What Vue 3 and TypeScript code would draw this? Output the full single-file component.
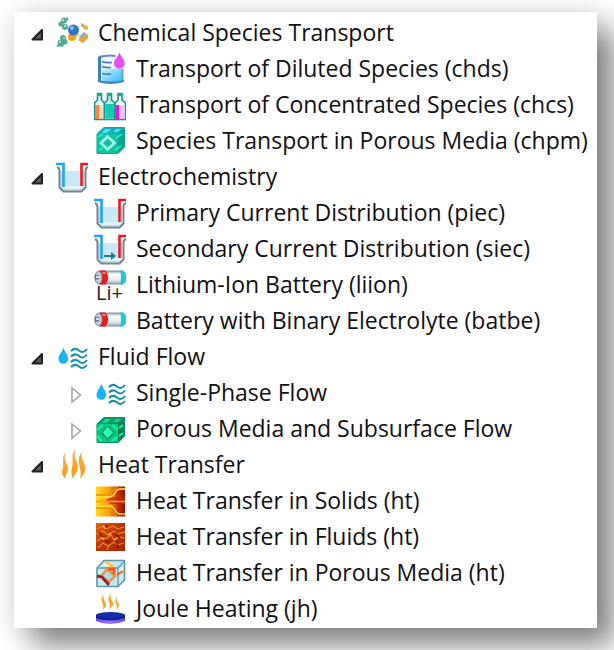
<script setup lang="ts">
import { reactive } from 'vue'

interface TreeItem {
  label: string
  icon: string
  branch?: boolean
}

interface TreeGroup extends TreeItem {
  open: boolean
  children: TreeItem[]
}

const groups = reactive<TreeGroup[]>([
  {
    label: 'Chemical Species Transport',
    icon: 'molecules',
    open: true,
    children: [
      { label: 'Transport of Diluted Species (chds)', icon: 'diluted' },
      { label: 'Transport of Concentrated Species (chcs)', icon: 'bottles' },
      { label: 'Species Transport in Porous Media (chpm)', icon: 'porous-species' },
    ],
  },
  {
    label: 'Electrochemistry',
    icon: 'cell',
    open: true,
    children: [
      { label: 'Primary Current Distribution (piec)', icon: 'cell' },
      { label: 'Secondary Current Distribution (siec)', icon: 'cell-arrow' },
      { label: 'Lithium-Ion Battery (liion)', icon: 'lithium' },
      { label: 'Battery with Binary Electrolyte (batbe)', icon: 'battery' },
    ],
  },
  {
    label: 'Fluid Flow',
    icon: 'flow',
    open: true,
    children: [
      { label: 'Single-Phase Flow', icon: 'flow', branch: true },
      { label: 'Porous Media and Subsurface Flow', icon: 'porous-flow', branch: true },
    ],
  },
  {
    label: 'Heat Transfer',
    icon: 'heat',
    open: true,
    children: [
      { label: 'Heat Transfer in Solids (ht)', icon: 'heat-solid' },
      { label: 'Heat Transfer in Fluids (ht)', icon: 'heat-fluid' },
      { label: 'Heat Transfer in Porous Media (ht)', icon: 'heat-porous' },
      { label: 'Joule Heating (jh)', icon: 'joule' },
    ],
  },
])
</script>

<template>
  <svg class="sprite" aria-hidden="true">
    <defs>
      <linearGradient id="g-liquid" x1="0" y1="0" x2="1" y2="1">
        <stop offset="0" stop-color="#c4f3ff" />
        <stop offset="1" stop-color="#35b6f4" />
      </linearGradient>
      <linearGradient id="g-cube" x1="0" y1="0" x2="1" y2="1">
        <stop offset="0" stop-color="#12c9b6" />
        <stop offset="1" stop-color="#08c48c" />
      </linearGradient>
      <linearGradient id="g-flame" x1="0" y1="0" x2="0" y2="1">
        <stop offset="0" stop-color="#f7b04a" />
        <stop offset="1" stop-color="#ff9c08" />
      </linearGradient>
      <linearGradient id="g-solid" x1="0" y1="0" x2="1" y2="0">
        <stop offset="0" stop-color="#ffd91c" />
        <stop offset="0.45" stop-color="#f8a30c" />
        <stop offset="0.75" stop-color="#c83208" />
        <stop offset="1" stop-color="#8e0f05" />
      </linearGradient>
      <linearGradient id="g-fluid" x1="0" y1="0" x2="1" y2="1">
        <stop offset="0" stop-color="#e0620c" />
        <stop offset="0.5" stop-color="#b93206" />
        <stop offset="1" stop-color="#a82605" />
      </linearGradient>
      <linearGradient id="g-metal" x1="0" y1="0" x2="0" y2="1">
        <stop offset="0" stop-color="#8fa5b3" />
        <stop offset="0.25" stop-color="#ffffff" />
        <stop offset="0.7" stop-color="#e5e9ee" />
        <stop offset="1" stop-color="#9aabb7" />
      </linearGradient>
      <linearGradient id="g-disc" x1="0" y1="0" x2="1" y2="0">
        <stop offset="0" stop-color="#6a48e8" />
        <stop offset="0.5" stop-color="#a070f4" />
        <stop offset="1" stop-color="#6a48e8" />
      </linearGradient>
    </defs>

    <symbol id="molecules" viewBox="0 0 32 32">
      <g fill="#55aa8b">
        <circle cx="8" cy="3.500" r="3" />
        <circle cx="5" cy="7" r="2.600" />
        <circle cx="9" cy="10" r="3" />
        <circle cx="7" cy="21" r="3" />
        <circle cx="9" cy="25" r="2.600" />
        <circle cx="5" cy="26" r="3.400" />
        <path d="M9 2l3-2v4zM0 29.500l4-5 3 5z" />
      </g>
      <g fill="#b8dccd">
        <circle cx="7" cy="3" r="1.200" />
        <circle cx="9" cy="9" r="1.200" />
        <circle cx="4" cy="25" r="1.200" />
        <circle cx="8" cy="21" r="1" />
      </g>
      <circle cx="16" cy="20" r="4" fill="#f5a312" />
      <path d="M19 16l5 1-4 4z" fill="#f3c66d" />
      <circle cx="17.500" cy="13" r="5.500" fill="#2f74c8" />
      <circle cx="16" cy="11" r="2" fill="#8bbcef" />
      <path d="M25 6l7 3.500v3L29 13l-4-4z" fill="#eeb248" />
      <path d="M23 21l6-5 3 2v3l-5 5-4-2z" fill="#eda32e" />
      <path d="M23 20l5-5 2 2-4 4zM25 6l3 2-1 2z" fill="#8aa9c9" />
    </symbol>

    <symbol id="diluted" viewBox="0 0 32 32">
      <path d="M5 4q11-2 24 0v24q-12 4-24 0z" fill="#eef7fe" />
      <path d="M8 17q11-2 20-1v12q-10 3-20 1z" fill="url(#g-liquid)" />
      <path d="M4.500 4q10-2.500 17-1" fill="none" stroke="#5c8cc4" stroke-width="2" />
      <path d="M5.500 4v24" fill="none" stroke="#3a7cbc" stroke-width="3" />
      <path d="M28.500 16v12" fill="none" stroke="#5fa5da" stroke-width="2" />
      <path d="M8 8.500q4 1.500 10 1M8 13.500q4 1.500 9 1M8 20.500q4 1 9 0.500" fill="none" stroke="#4f7ab4" stroke-width="1.600" />
      <path d="M4 27v2q12 4 26 0v-2q-13 3-26 0z" fill="#3f83c4" />
      <path d="M25.500-1C24.500 4 20 6 20 10.500a5.300 5.300 0 0 0 10.600 0C30.600 6 26.500 4 25.500-1z" fill="#e34ff3" />
    </symbol>

    <symbol id="bottles" viewBox="0 0 32 32">
      <g stroke="#16938f" stroke-width="1.600" stroke-linejoin="round">
        <path d="M3.500 4.500h4V11l3 3v16.500h-10V14l3-3z" fill="#e6fbf8" />
        <path d="M13.500 4.500h4V11l3.500 3v16.500H10.500V14l3-3z" fill="#c0f2e8" />
        <path d="M24 4.500h4V11l3.500 3v16.500H21V14l3-3z" fill="#eafafa" />
      </g>
      <path d="M1 16h4v14H1z" fill="#fa8544" />
      <path d="M5 16h4v14H5z" fill="#fcd8bb" />
      <path d="M11.500 15h8.500v14.500h-8.500z" fill="#11cfae" />
      <path d="M21.500 16h3.500v14h-3.500z" fill="#df16ec" />
      <path d="M25 16h5.500v14H25z" fill="#f4c2f8" />
      <path d="M3 4h5v3H3zM13 4h5v3h-5zM23.500 4h5v3h-5z" fill="#16aaa5" />
    </symbol>

    <symbol id="porous-species" viewBox="0 0 32 32">
      <path d="M3 9l7-6.500h20.500V22L24 28.500H3z" fill="url(#g-cube)" stroke="#109fa0" stroke-linejoin="round" />
      <path d="M3 9l7-6.500h20.500L24 9z" fill="#16aebd" />
      <path d="M24 9l6.500-6.500V22L24 28.500z" fill="#0aa498" />
      <path d="M11 4h6l-4 4H8zM22 4h5l-3 3h-5z" fill="#43e9ee" />
      <path d="M13.500 11.500l7 6.500-7 6.500-6.500-6.500z" fill="#1bbda0" stroke="#a8ffed" stroke-width="2.600" />
      <path d="M4 12l5-3M21 25l6-4M5 25l4-2M22 13l6-4" fill="none" stroke="#2ce9cf" stroke-width="1.600" />
    </symbol>

    <symbol id="porous-flow" viewBox="0 0 32 32">
      <path d="M3 11l7-6.500h20.500V23L24 29.500H3z" fill="#04cb7d" stroke="#088c62" stroke-linejoin="round" />
      <path d="M3 11l7-6.500h20.500L24 11z" fill="#099a68" />
      <path d="M24 11l6.500-6.500V23L24 29.500z" fill="#078354" />
      <path d="M11 6h6l-4 4H8zM22 6h5l-3 3h-5z" fill="#11d68a" />
      <path d="M13.500 12L22 19.500 13.500 28 6 19.500z" fill="#08a566" />
      <path d="M13.500 14l5.500 5.500-5.500 5.500L9 19.500z" fill="#2affb7" />
      <path d="M3 17l6-5M18 12l6 5M3 23l5 5M18 28l5-4M25 15l4-3M25 23l4-3" fill="none" stroke="#1bf4a8" stroke-width="1.800" />
    </symbol>

    <symbol id="cell" viewBox="0 0 32 32">
      <path d="M4 11h24v16l-3 3H7l-3-3z" fill="#e3f4fd" />
      <path d="M9 10h15v15H9z" fill="#c9e9fb" />
      <path d="M1 6q2.500 1 2.500 4v16.500L7.500 30.500h18l4-4V10Q29.500 7 32 6" fill="none" stroke="#72868d" stroke-width="2" />
      <path d="M5.500 10v16l2.500 2.500h17l2.500-2.500V10" fill="none" stroke="#c6d5db" />
      <path d="M0 3h7.500v23" fill="none" stroke="#1ba4f7" stroke-width="2.600" />
      <path d="M32 3h-6.500v22" fill="none" stroke="#ee1822" stroke-width="2.600" />
    </symbol>

    <symbol id="cell-arrow" viewBox="0 0 32 32">
      <use href="#cell" width="32" height="32" />
      <path d="M10 22h7v-3l5 4-5 4v-3h-7z" fill="#187e91" />
    </symbol>

    <symbol id="battery" viewBox="0 0 32 32">
      <path d="M5 8h23q4 1 4 6.500T28 21H5Q1 20 1 14.500T5 8z" fill="url(#g-metal)" stroke="#8497a3" />
      <path d="M5 7.500h6q3 2 3 7t-3 7H5q3-2 3-7t-3-7z" fill="#ef1717" />
      <path d="M8 9h3l1 2H9z" fill="#ff8b84" />
      <path d="M26 7.500h3q3 2 3 7t-3 7h-3q2-7 0-14z" fill="#1bc8d4" />
      <ellipse cx="4.500" cy="14.500" rx="3.500" ry="6" fill="#c3cfd9" stroke="#7d93a2" />
      <path d="M1 12h4v4.500H1z" fill="#5d7888" />
      <path d="M2 13h3v2H2z" fill="#d9e5ed" />
    </symbol>

    <symbol id="lithium" viewBox="0 0 32 32">
      <use href="#battery" y="-6" width="32" height="32" />
    </symbol>

    <symbol id="flow" viewBox="0 0 32 32">
      <path d="M7.500 6c0 4-5 7-5 12a4.800 4.800 0 0 0 9.600 0C12.100 13 7.500 10 7.500 6z" fill="#16b2f7" />
      <g fill="none" stroke="#1590ad" stroke-width="2">
        <path d="M15 10q4-4 8-0.500t8-1.500" />
        <path d="M15 15.500q4-4 8-0.500t8-1.500" />
        <path d="M15 21q4-4 8-0.500t8-1.500" />
        <path d="M15 26q4-4 8-0.500t8-1.500" />
      </g>
    </symbol>

    <symbol id="heat" viewBox="0 0 32 32">
      <g fill="url(#g-flame)">
        <path d="M10 3C6 10 12 15 12 20c0 4-4 6-2 10-4-3-5-7-3-11 1-5-2-11 3-16z" />
        <path d="M20 0c-4 7 2 13 2 18 0 5-4 7-5 12-2-4-2-8-1-12 2-6-2-13 4-18z" />
        <path d="M26 3c-2 7 4 12 3 17 0 5-3 7-5 10 1-4 1-7 0-10-1-6-3-12 2-17z" />
      </g>
    </symbol>

    <symbol id="heat-solid" viewBox="0 0 32 32">
      <path d="M2 1.500h29v30H2z" fill="url(#g-solid)" />
      <path d="M16 12h15v7H16l-4-3.500z" fill="#bd2908" opacity="0.700" />
      <g fill="none" stroke-width="1.500">
        <path d="M2 12h13q4 0 6-4t5-4h5" stroke="#ffe14a" />
        <path d="M2 16.500h29" stroke="#ff9c24" />
        <path d="M2 21h13q4 0 6 4t5 4h5" stroke="#ffda39" />
        <path d="M2 10h10q5 0 8-5l3-3M2 23h10q5 0 8 5l2 3" stroke="#e89208" />
      </g>
    </symbol>

    <symbol id="heat-fluid" viewBox="0 0 32 32">
      <path d="M2 2h29v28H2z" fill="url(#g-fluid)" />
      <path d="M3 8l6-3 3 3 7-3 5 3 6-2M2 13l7-3 5 4 6-4 3 3 8-2M3 20l4-3 5 1 5-4 3 5 5-3 5 1M4 27l5-5 5 3 6-4 3 3 7-2M13 29l2-5" fill="none" stroke="#f0821a" stroke-width="1.300" />
      <path d="M5 11l4 5M13 4l-2 5M21 12l5 5M11 19l4 2M22 21l3 6" fill="none" stroke="#811702" stroke-width="1.600" />
      <path d="M9 5l3 3M14 14l3-2M20 19l3-2M7 17l3 1" fill="none" stroke="#ffcf50" stroke-width="1.400" />
    </symbol>

    <symbol id="heat-porous" viewBox="0 0 32 32">
      <path d="M3 11l7-7.500h20.500V23L24 29.500H3z" fill="#c8e9f2" stroke="#5d97a9" stroke-width="1.600" stroke-linejoin="round" />
      <path d="M3 11h21v18.500M24 11l6.500-7" fill="none" stroke="#649eaf" stroke-width="1.400" />
      <path d="M9 9l3-3h6l-3 3zM25 13l4-3v6l-4 3z" fill="#f0fcff" />
      <path d="M13.500 12l7.500 7-6 6-8-6z" fill="#a9dbe8" stroke="#f58a2b" stroke-width="2.400" />
      <path d="M12 5l6 4-4 4" fill="none" stroke="#ffc02d" stroke-width="2.600" />
      <path d="M14 12h6v5" fill="none" stroke="#f0552a" stroke-width="3" />
      <path d="M3 19l5 1 7 8" fill="none" stroke="#9b2418" stroke-width="3" />
      <path d="M23 18l6-4" stroke="#f0682a" stroke-width="2.400" />
    </symbol>

    <symbol id="joule" viewBox="0 0 32 32">
      <g fill="url(#g-flame)">
        <path d="M10 2c-2 5 3 7 2 11l-3 4c1-4 0-5-1-8s-1-4 2-7z" />
        <path d="M17 0c-2 6 3 8 2 12l-4 5c1-4 1-5 0-8s-1-5 2-9z" />
        <path d="M23 3c-2 5 3 7 2 10l-3 4c1-4 1-5 0-7s-1-4 1-7z" />
      </g>
      <path d="M2 23v5q14 6 29 0v-5z" fill="url(#g-disc)" />
      <path d="M2 22v3q14 5 29 0v-3z" fill="#0c2596" />
      <ellipse cx="16.500" cy="22" rx="14.500" ry="3" fill="#12309f" />
    </symbol>
  </svg>

  <main class="stage">
    <nav class="card" aria-label="Physics interfaces">
      <ul class="tree">
        <li v-for="group in groups" :key="group.label">
          <div class="row">
            <button
              class="toggle"
              type="button"
              :aria-label="group.label"
              :aria-expanded="group.open"
              @click="group.open = !group.open"
            >
              <svg v-if="group.open" class="arrow" viewBox="0 0 18 18">
                <path d="M14 6v9.500H4.500z" fill="#5a5a5a" stroke="#202020" stroke-width="2" stroke-linejoin="round" />
              </svg>
              <svg v-else class="arrow" viewBox="0 0 18 18">
                <path d="M6 3l8.500 7L6 17z" fill="#fff" stroke="#a5a5a5" stroke-width="1.600" />
              </svg>
            </button>
            <svg class="icon" aria-hidden="true"><use :href="'#' + group.icon" /></svg>
            <span class="label">{{ group.label }}</span>
          </div>
          <ul v-if="group.open" class="tree nested">
            <li v-for="item in group.children" :key="item.label" class="row">
              <button v-if="item.branch" class="toggle" type="button" :aria-label="item.label" aria-expanded="false">
                <svg class="arrow" viewBox="0 0 18 18">
                  <path d="M6 4l8.500 7L6 18z" fill="#fff" stroke="#a5a5a5" stroke-width="1.600" />
                </svg>
              </button>
              <span v-else class="toggle"></span>
              <svg class="icon" aria-hidden="true">
                <use :href="'#' + item.icon" />
                <text v-if="item.icon === 'lithium'" class="ion" x="2" y="31">Li+</text>
              </svg>
              <span class="label">{{ item.label }}</span>
            </li>
          </ul>
        </li>
      </ul>
    </nav>
  </main>
</template>

<style>
body {
  background: #fff;
}
</style>

<style scoped>
.sprite {
  position: absolute;
  width: 0;
  height: 0;
}

.stage {
  box-sizing: border-box;
  min-height: 100vh;
  padding: 12px 17px 22px 14px;
  overflow: hidden;
}

.card {
  padding: 3px 0 1px 14px;
  background: #fff;
  box-shadow:
    0 0 24px rgba(0, 0, 0, 0.12),
    18px 18px 28px rgba(0, 0, 0, 0.46);
}

.tree {
  margin: 0;
  padding: 0;
  list-style: none;
}

.nested {
  padding-left: 38px;
}

.row {
  display: flex;
  align-items: center;
  height: 36px;
}

.toggle {
  display: flex;
  flex: none;
  align-items: center;
  width: 28px;
  height: 36px;
  padding: 0;
  border: 0;
  background: none;
}

.arrow {
  width: 18px;
  height: 18px;
  overflow: visible;
}

.icon {
  flex: none;
  width: 32px;
  height: 32px;
  margin-right: 10px;
  overflow: visible;
}

.label {
  padding-bottom: 2px;
  color: #101014;
  font: 23px/34px 'Open Sans', 'Noto Sans', sans-serif;
  white-space: nowrap;
}

.ion {
  fill: #222;
  font: 20px 'Open Sans', 'Noto Sans', sans-serif;
}
</style>
